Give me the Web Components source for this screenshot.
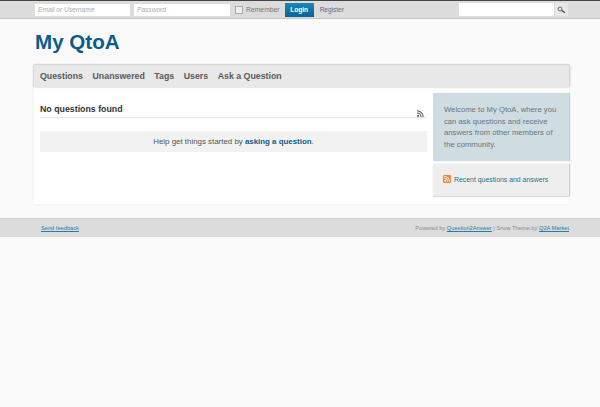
<!DOCTYPE html>
<html>
<head>
<meta charset="utf-8">
<title>My QtoA</title>
<style>
html, body { margin: 0; padding: 0; background: #fafafa; }
body { font-family: "Liberation Sans", Arial, sans-serif; height: 407px; overflow: hidden; }
</style>
</head>
<body>
<top-bar></top-bar>
<site-title>My QtoA</site-title>
<main-panel>
  <q-list></q-list>
  <side-bar slot="side"></side-bar>
</main-panel>
<site-footer></site-footer>

<script>
class TopBar extends HTMLElement {
    constructor() {
        super();
        const shadow = this.attachShadow({ mode: "open" });
        shadow.innerHTML = `
        <style>
        :host { display: block; height: 17px; background: #dcdcdc; border-top: 1px solid #444; border-bottom: 1px solid #c4c4c4; font-size: 6.8px; }
        .row { display: flex; align-items: center; height: 17px; padding-left: 35px; width: 533px; }
        .field { width: 95px; height: 12px; background: #fff; color: #aaa; font-style: italic; font-size: 6.6px; line-height: 12px; padding-left: 3px; box-sizing: border-box; }
        .pass { margin-left: 4px; width: 96px; }
        .check { width: 6px; height: 6px; margin-left: 5px; background: #eee; border: 1px solid #aaa; }
        .rem { margin-left: 3px; color: #777; }
        .login { margin-left: 5px; width: 29px; height: 14px; background: linear-gradient(#1a87b8, #0a6393); color: #fff; font-weight: bold; font-size: 6.6px; line-height: 14px; text-align: center; }
        .reg { margin-left: 6px; color: #4c6d8f; font-size: 6.5px; }
        .search { margin-left: auto; width: 95px; height: 13px; background: #fff; }
        .go { margin-left: 1px; width: 13px; height: 13px; background: #e8e8e8; display: flex; align-items: center; justify-content: center; }
        </style>
        <div class="row">
            <div class="field">Email or Username</div>
            <div class="field pass">Password</div>
            <div class="check"></div>
            <span class="rem">Remember</span>
            <div class="login">Login</div>
            <span class="reg">Register</span>
            <div class="search"></div>
            <div class="go">
                <svg width="9" height="8" viewBox="0 0 9 8"><circle cx="3" cy="3" r="2" fill="none" stroke="#666" stroke-width="1"/><path d="M4.6 4.4 L8 6.8" stroke="#555" stroke-width="1.4"/></svg>
            </div>
        </div>`;
    }
}

class SiteTitle extends HTMLElement {
    constructor() {
        super();
        const shadow = this.attachShadow({ mode: "open" });
        shadow.innerHTML = `
        <style>
        :host { display: block; padding: 10px 0 0 35px; height: 36px; font-size: 20.6px; line-height: 26px; font-weight: bold; color: #0b5c8c; }
        </style>
        <slot></slot>`;
    }
}

class MainPanel extends HTMLElement {
    constructor() {
        super();
        const shadow = this.attachShadow({ mode: "open" });
        shadow.innerHTML = `
        <style>
        :host { display: block; width: 535px; margin-left: 34px; background: #fff; box-shadow: 0 1px 2px #f0f0f0; }
        nav { display: flex; height: 22px; align-items: center; background: #e8e8e8; padding-left: 6px; gap: 9.5px; font-size: 8.8px; font-weight: bold; color: #5a5a5a; box-shadow: 1px 0 2px #c8c8c8, -1px 0 1px #dadada, 0 -1px 1px #dadada; }
        .body { display: flex; height: 117px; }
        .left { width: 399px; }
        .right { width: 136px; padding-top: 6px; box-sizing: border-box; }
        </style>
        <nav><span>Questions</span><span>Unanswered</span><span>Tags</span><span>Users</span><span>Ask a Question</span></nav>
        <div class="body">
            <div class="left"><slot></slot></div>
            <div class="right"><slot name="side"></slot></div>
        </div>`;
    }
}

class QList extends HTMLElement {
    constructor() {
        super();
        const shadow = this.attachShadow({ mode: "open" });
        shadow.innerHTML = `
        <style>
        :host { display: block; padding: 0 6px; }
        .head { display: flex; justify-content: space-between; align-items: flex-end; height: 31px; border-bottom: 1px solid #e4e4e4; font-size: 8.8px; font-weight: bold; color: #333; line-height: 14px; box-sizing: border-box; }
        .head span { position: relative; top: -1px; }
        .head svg { margin-right: 3px; }
        .msg { margin-top: 13px; height: 21px; background: #f2f2f2; font-size: 7.9px; line-height: 21px; text-align: center; color: #555; }
        a { color: #0b5c8c; font-weight: bold; text-decoration: none; }
        </style>
        <div class="head">
            <span>No questions found</span>
            <svg width="7" height="7" viewBox="0 0 7 7"><circle cx="1" cy="6" r="1" fill="#555"/><path d="M0 3 A4 4 0 0 1 4 7 M0 .8 A6.2 6.2 0 0 1 6.2 7" fill="none" stroke="#555" stroke-width="1.1"/></svg>
        </div>
        <div class="msg">Help get things started by <a>asking a question</a>.</div>`;
    }
}

class SideBar extends HTMLElement {
    constructor() {
        super();
        const shadow = this.attachShadow({ mode: "open" });
        shadow.innerHTML = `
        <style>
        :host { display: block; }
        .welcome { height: 68px; background: #cfdde3; color: #6b7379; font-size: 7.7px; line-height: 11.5px; padding: 11px 8px 0 11px; box-sizing: border-box; box-shadow: 1px 0 1px #ccc; }
        .feed { margin-top: 3px; height: 32px; background: #eeeeee; display: flex; align-items: center; padding: 0 0 2px 10px; box-sizing: border-box; color: #2a6f90; font-size: 6.9px; gap: 3px; box-shadow: 1px 0 1px #ccc, 0 1px 1px #ddd; }
        </style>
        <div class="welcome">Welcome to My QtoA, where you can ask questions and receive answers from other members of the community.</div>
        <div class="feed">
            <svg width="8" height="8" viewBox="0 0 8 8"><rect width="8" height="8" rx="1.2" fill="#ee8a45"/><circle cx="2.2" cy="5.8" r=".9" fill="#fff"/><path d="M1.4 3.4 A3.2 3.2 0 0 1 4.6 6.6 M1.4 1.5 A5.1 5.1 0 0 1 6.5 6.6" fill="none" stroke="#fff" stroke-width=".9"/></svg>
            <span>Recent questions and answers</span>
        </div>`;
    }
}

class SiteFooter extends HTMLElement {
    constructor() {
        super();
        const shadow = this.attachShadow({ mode: "open" });
        shadow.innerHTML = `
        <style>
        :host { display: flex; justify-content: space-between; align-items: center; margin-top: 14px; height: 18px; background: #dcdcdc; border-top: 1px solid #cfcfcf; padding: 0 31px 0 41px; font-size: 5.7px; color: #888; }
        a { color: #2a7aa5; text-decoration: underline; }
        </style>
        <a>Send feedback</a>
        <span>Powered by <a>Question2Answer</a> | Snow Theme by <a>Q2A Market</a></span>`;
    }
}

customElements.define("top-bar", TopBar);
customElements.define("site-title", SiteTitle);
customElements.define("main-panel", MainPanel);
customElements.define("q-list", QList);
customElements.define("side-bar", SideBar);
customElements.define("site-footer", SiteFooter);
</script>
</body>
</html>
